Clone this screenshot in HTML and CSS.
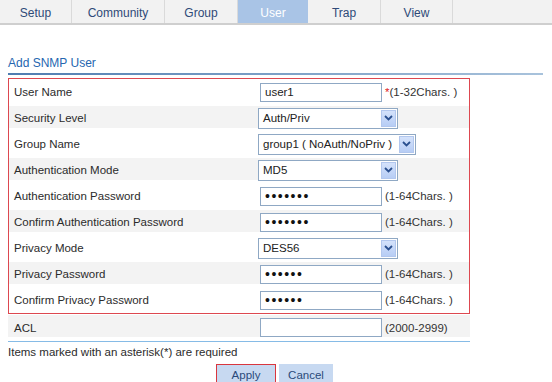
FILE: index.html
```html
<!DOCTYPE html>
<html>
<head>
  <title>SNMP User</title>
  <link rel="stylesheet" href="styles.css">
</head>
<body>
  <div class="tabs">
    <div class="tab tab-setup">Setup</div>
    <div class="tab tab-community">Community</div>
    <div class="tab tab-group">Group</div>
    <div class="tab tab-user active">User</div>
    <div class="tab tab-trap">Trap</div>
    <div class="tab tab-view">View</div>
    <div class="tab tab-rest"></div>
  </div>

  <div class="content">
    <div class="title">Add SNMP User</div>

    <div class="form">
      <div class="required-box">
        <div class="row">
          <div class="label">User Name</div>
          <div class="field">
            <input class="text-input" type="text" value="user1">
            <span class="hint"><span class="star">*</span>(1-32Chars. )</span>
          </div>
        </div>
        <div class="row alt">
          <div class="label">Security Level</div>
          <div class="field">
            <div class="select sel-level"><span class="sel-text">Auth/Priv</span><span class="sel-arrow"><svg width="9" height="6" viewBox="0 0 9 6"><path d="M1 1 L4.5 4.5 L8 1" fill="none" stroke="#2a4f8f" stroke-width="1.8"/></svg></span></div>
          </div>
        </div>
        <div class="row">
          <div class="label">Group Name</div>
          <div class="field">
            <div class="select sel-group"><span class="sel-text">group1&nbsp;( NoAuth/NoPriv )</span><span class="sel-arrow"><svg width="9" height="6" viewBox="0 0 9 6"><path d="M1 1 L4.5 4.5 L8 1" fill="none" stroke="#2a4f8f" stroke-width="1.8"/></svg></span></div>
          </div>
        </div>
        <div class="row alt">
          <div class="label">Authentication Mode</div>
          <div class="field">
            <div class="select sel-level"><span class="sel-text">MD5</span><span class="sel-arrow"><svg width="9" height="6" viewBox="0 0 9 6"><path d="M1 1 L4.5 4.5 L8 1" fill="none" stroke="#2a4f8f" stroke-width="1.8"/></svg></span></div>
          </div>
        </div>
        <div class="row">
          <div class="label">Authentication Password</div>
          <div class="field">
            <input class="text-input pwd" type="password" value="1234567">
            <span class="hint">(1-64Chars. )</span>
          </div>
        </div>
        <div class="row alt">
          <div class="label">Confirm Authentication Password</div>
          <div class="field">
            <input class="text-input pwd" type="password" value="1234567">
            <span class="hint">(1-64Chars. )</span>
          </div>
        </div>
        <div class="row">
          <div class="label">Privacy Mode</div>
          <div class="field">
            <div class="select sel-level"><span class="sel-text">DES56</span><span class="sel-arrow"><svg width="9" height="6" viewBox="0 0 9 6"><path d="M1 1 L4.5 4.5 L8 1" fill="none" stroke="#2a4f8f" stroke-width="1.8"/></svg></span></div>
          </div>
        </div>
        <div class="row alt">
          <div class="label">Privacy Password</div>
          <div class="field">
            <input class="text-input pwd" type="password" value="123456">
            <span class="hint">(1-64Chars. )</span>
          </div>
        </div>
        <div class="row">
          <div class="label">Confirm Privacy Password</div>
          <div class="field">
            <input class="text-input pwd" type="password" value="123456">
            <span class="hint">(1-64Chars. )</span>
          </div>
        </div>
      </div>
      <div class="row alt acl">
        <div class="label">ACL</div>
        <div class="field">
          <input class="text-input" type="text" value="">
          <span class="hint">(2000-2999)</span>
        </div>
      </div>
    </div>

    <div class="note">Items marked with an asterisk(*) are required</div>

    <div class="buttons">
      <button class="btn btn-apply">Apply</button>
      <button class="btn btn-cancel">Cancel</button>
    </div>
  </div>
</body>
</html>
```

FILE: styles.css
```css
body {
  margin: 0;
  background-color: white;
  font-family: "Liberation Sans", Arial, sans-serif;
  font-size: 11.5px;
  color: #2b2b2b;
}
.tabs {
  display: flex;
  height: 23px;
  background-color: #f2f2f2;
  border-bottom: 2px solid #cfcfcf;
}
.tab {
  display: flex;
  align-items: center;
  justify-content: center;
  padding-top: 3px;
  color: #2f4a78;
  font-size: 12px;
  border-right: 1px solid #dadada;
  box-sizing: border-box;
}
.tab-setup { width: 72px; }
.tab-community { width: 93px; }
.tab-group { width: 73px; }
.tab-user { width: 70px; }
.tab-trap { width: 73px; }
.tab-view { width: 72px; }
.tab-rest { flex: 1; border-right: none; }
.tab.active {
  background-color: #a9c4e6;
  color: #ffffff;
  border-right: none;
}
.content {
  padding: 0 8px;
}
.title {
  margin-top: 31px;
  color: #2566b0;
  font-size: 12px;
  line-height: 14px;
  padding-bottom: 3px;
  border-bottom: 2px solid #6f93bd;
  border-image: linear-gradient(to right, #4f7cb0, #a9c3dc) 1;
  width: 535px;
}
.form {
  margin-top: 3px;
  width: 462px;
}
.required-box {
  border: 1px solid #dd4850;
}
.row {
  display: flex;
  align-items: center;
  height: 26px;
  background-color: #ffffff;
}
.row.alt {
  background: linear-gradient(#ffffff 1px, #f3f3f3 1px, #f3f3f3 23px, #ffffff 23px);
}
.label {
  width: 246px;
  padding-left: 5px;
  flex-shrink: 0;
}
.acl .label {
  width: 246px;
  padding-left: 6px;
}
.acl {
  border-bottom: 1px solid #86bbe6;
  height: 27px;
}
.field {
  display: flex;
  align-items: center;
}
.text-input {
  width: 122px;
  height: 19px;
  box-sizing: border-box;
  border: 1px solid #8fa8c4;
  padding: 0 4px;
  margin: 0;
  font-family: "Liberation Sans", Arial, sans-serif;
  font-size: 11.5px;
  color: #222;
  background: #fff;
  outline: none;
}
.text-input.pwd {
  font-size: 14px;
  letter-spacing: 1.5px;
  color: #111;
}
.hint {
  margin-left: 3px;
  color: #333;
}
.star {
  color: #e02020;
}
.select {
  display: flex;
  align-items: center;
  height: 21px;
  box-sizing: border-box;
  border: 1px solid #8fa8c4;
  background: #fff;
  margin-left: -2px;
  padding: 1px;
}
.sel-level { width: 140px; }
.sel-group { width: 158px; }
.sel-text {
  flex: 1;
  padding-left: 3px;
  color: #222;
  white-space: nowrap;
}
.sel-arrow {
  width: 15px;
  height: 17px;
  display: flex;
  align-items: center;
  justify-content: center;
  background: linear-gradient(#d4e2fb, #b7cdf5);
  border: 1px solid #b2c7ee;
  box-sizing: border-box;
}
.note {
  margin-top: 3px;
  line-height: 14px;
  color: #2b2b2b;
}
.buttons {
  display: flex;
  gap: 3px;
  margin-top: 5px;
  padding-left: 208px;
}
.btn {
  height: 21px;
  font-family: "Liberation Sans", Arial, sans-serif;
  font-size: 11.5px;
  color: #2a4a7a;
  background-color: #c7d9f1;
  border: 1px solid #c7d9f1;
  padding: 0;
  cursor: pointer;
}
.btn-apply {
  width: 60px;
  border: 1px solid #d9363e;
}
.btn-cancel {
  width: 54px;
}
```
